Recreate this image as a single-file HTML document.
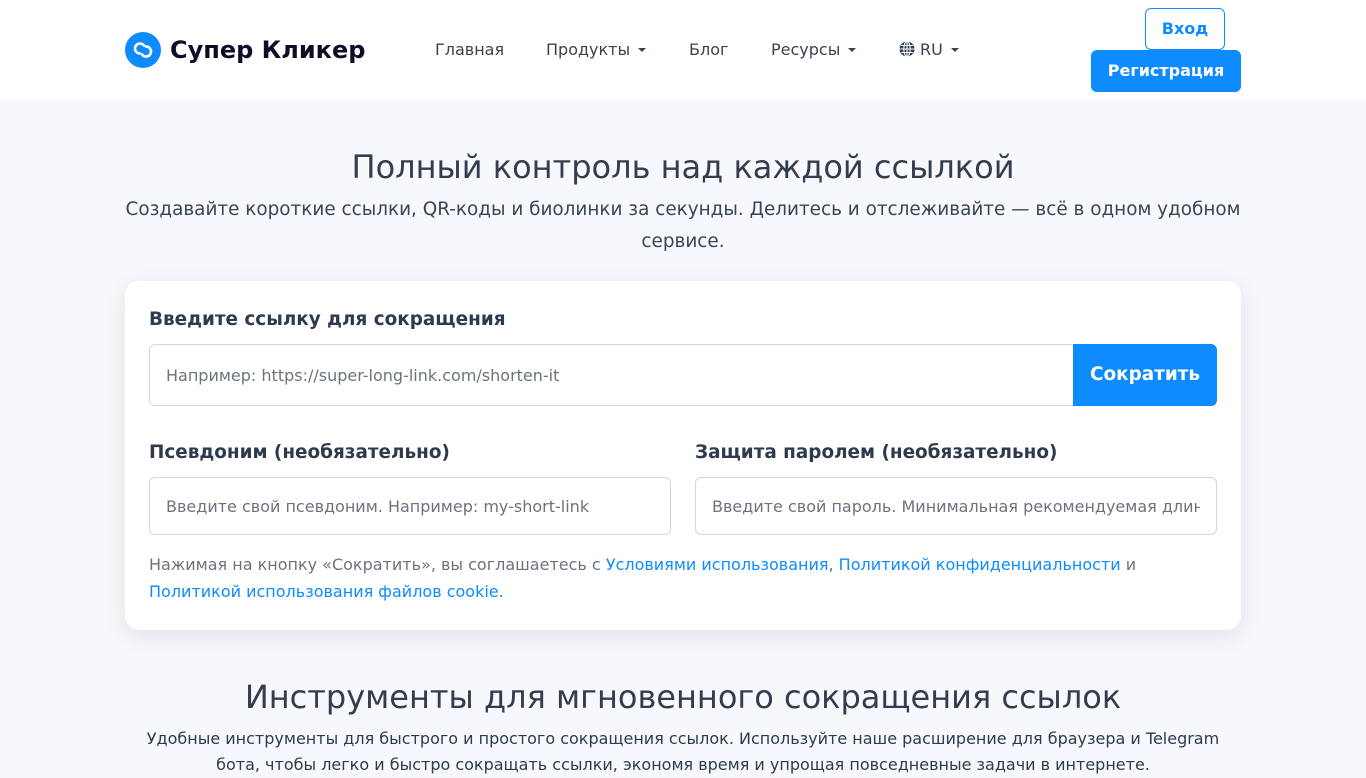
<!DOCTYPE html>
<html><head><meta charset="utf-8"><style>
*{box-sizing:border-box;margin:0;padding:0}
body{width:1366px;height:768px;overflow:hidden;background:#f7f8fc;font-family:"DejaVu Sans","Liberation Sans",sans-serif;color:#2e3a4d}
header{background:#fff;height:100px;position:relative}
.logo{position:absolute;left:125px;top:32px;display:flex;align-items:center;font-weight:bold;font-size:24px;color:#0d0d26}
.logo .c{width:36px;height:36px;border-radius:50%;background:#0d8bff;margin-right:9px;display:flex;align-items:center;justify-content:center}
nav a{position:absolute;top:40px;font-size:16px;color:#3a4150;text-decoration:none}
.car::after{content:"";display:inline-block;margin-left:8px;vertical-align:3px;border-left:4px solid transparent;border-right:4px solid transparent;border-top:4px solid #3a4150}
.btn1{position:absolute;left:1145px;top:8px;width:80px;height:42px;border:1px solid #0d8bff;border-radius:6px;color:#0d8bff;font-weight:bold;font-size:16px;text-align:center;line-height:40px;background:#fff}
.btn2{position:absolute;left:1091px;top:50px;width:150px;height:42px;border-radius:6px;background:#0d8bff;color:#fff;font-weight:bold;font-size:16px;text-align:center;line-height:42px}
h1{position:absolute;top:148px;left:0;width:1366px;text-align:center;font-weight:normal;font-size:32px;color:#333d4f}
.sub{position:absolute;top:194px;left:110px;width:1146px;text-align:center;font-size:18.4px;line-height:32px;color:#3a4456}
.card{position:absolute;left:125px;top:281px;width:1116px;height:349px;background:#fff;border-radius:14px;box-shadow:0 6px 24px rgba(0,0,0,.09)}
.lbl{position:absolute;font-weight:bold;font-size:18.4px;color:#2e3a4d}
.inp{position:absolute;border:1px solid #d4d8de;border-radius:6px;font-size:16px;color:#6c737d;padding-left:16px;display:flex;align-items:center;white-space:nowrap;overflow:hidden;background:#fff}
.go{position:absolute;left:948px;top:63px;width:144px;height:62px;background:#0d8bff;color:#fff;font-weight:bold;font-size:18.4px;border-radius:0 6px 6px 0;text-align:center;line-height:62px}
.terms{position:absolute;left:24px;top:270px;width:1040px;font-size:16px;line-height:27px;color:#6c737d}
.terms a{color:#0d8bff;text-decoration:none}
h2{position:absolute;top:678px;left:0;width:1366px;text-align:center;font-weight:normal;font-size:32px;color:#333d4f}
.p2{position:absolute;top:726px;left:130px;width:1106px;text-align:center;font-size:16px;line-height:26px;color:#2e3a4d}
</style></head><body>
<header>
<div class="logo"><div class="c"><svg width="24" height="24" viewBox="0 0 24 24" fill="none" stroke="#fff" stroke-width="2.6" stroke-linecap="round"><path d="M13 7.5a5 5 0 1 0-4 8"/><path d="M11 16.5a5 5 0 1 0 4-8"/></svg></div>Супер Кликер</div>
<nav>
<a style="left:435px">Главная</a>
<a style="left:546px" class="car">Продукты</a>
<a style="left:689px">Блог</a>
<a style="left:771px" class="car">Ресурсы</a>
<a style="left:899px" class="car"><svg width="16" height="16" viewBox="0 0 16 16" style="vertical-align:-2px;margin-right:5px"><circle cx="8" cy="8" r="7.5" fill="#2e3a4d"/><path d="M.5 8h15M8 .5v15M2 4.5h12M2 11.5h12" stroke="#fff" stroke-width="1.1"/><ellipse cx="8" cy="8" rx="3.2" ry="7.5" fill="none" stroke="#fff" stroke-width="1.1"/></svg>RU</a>
</nav>
<div class="btn1">Вход</div>
<div class="btn2">Регистрация</div>
</header>
<h1>Полный контроль над каждой ссылкой</h1>
<div class="sub">Создавайте короткие ссылки, QR-коды и биолинки за секунды. Делитесь и отслеживайте — всё в одном удобном сервисе.</div>
<div class="card">
<div class="lbl" style="left:24px;top:28px">Введите ссылку для сокращения</div>
<div class="inp" style="left:24px;top:63px;width:926px;height:62px;border-radius:6px 0 0 6px">Например: https://super-long-link.com/shorten-it</div>
<div class="go">Сократить</div>
<div class="lbl" style="left:24px;top:161px">Псевдоним (необязательно)</div>
<div class="inp" style="left:24px;top:196px;width:522px;height:58px">Введите свой псевдоним. Например: my-short-link</div>
<div class="lbl" style="left:570px;top:161px">Защита паролем (необязательно)</div>
<div class="inp" style="left:570px;top:196px;width:522px;height:58px;padding-right:16px;overflow:hidden"><span style="overflow:hidden;display:block;width:488px">Введите свой пароль. Минимальная рекомендуемая длина</span></div>
<div class="terms">Нажимая на кнопку «Сократить», вы соглашаетесь с <a>Условиями использования</a>, <a>Политикой конфиденциальности</a> и <a>Политикой использования файлов cookie</a>.</div>
</div>
<h2>Инструменты для мгновенного сокращения ссылок</h2>
<div class="p2">Удобные инструменты для быстрого и простого сокращения ссылок. Используйте наше расширение для браузера и Telegram бота, чтобы легко и быстро сокращать ссылки, экономя время и упрощая повседневные задачи в интернете.</div>
</body></html>
